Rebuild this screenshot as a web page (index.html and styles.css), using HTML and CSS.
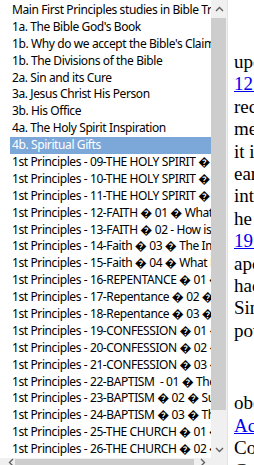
FILE: index.html
```html
<!DOCTYPE html>
<html lang="en">
  <head>
    <meta charset="UTF-8" />
    <title>First Principles</title>
    <link rel="stylesheet" href="styles.css">
  </head>
  <body>
    <div class="window">
      <!-- Lesson list -->
      <div class="listbox">
        <div class="list-main">
          <ul class="items">
            <li>Main First Principles studies in Bible Truths</li>
            <li>1a. The Bible God's Book</li>
            <li>1b. Why do we accept the Bible's Claims</li>
            <li>1b. The Divisions of the Bible</li>
            <li>2a. Sin and its Cure</li>
            <li>3a. Jesus Christ His Person</li>
            <li>3b. His Office</li>
            <li>4a. The Holy Spirit Inspiration</li>
            <li class="selected">4b. Spiritual Gifts</li>
            <li>1st Principles - 09-THE HOLY SPIRIT � 01 � The Spirit</li>
            <li>1st Principles - 10-THE HOLY SPIRIT � 02 � The Gifts</li>
            <li>1st Principles - 11-THE HOLY SPIRIT � 03 � Today</li>
            <li>1st Principles - 12-FAITH � 01 � What is Faith</li>
            <li>1st Principles - 13-FAITH � 02 - How is Faith gained</li>
            <li>1st Principles - 14-Faith � 03 � The Importance</li>
            <li>1st Principles - 15-Faith � 04 � What More</li>
            <li>1st Principles - 16-REPENTANCE � 01 � Meaning</li>
            <li>1st Principles - 17-Repentance � 02 � Necessity</li>
            <li>1st Principles - 18-Repentance � 03 � Fruits</li>
            <li>1st Principles - 19-CONFESSION � 01 � Meaning</li>
            <li>1st Principles - 20-CONFESSION � 02 � Examples</li>
            <li>1st Principles - 21-CONFESSION � 03 � Today</li>
            <li>1st Principles - 22-BAPTISM &nbsp;- 01 � The Meaning</li>
            <li>1st Principles - 23-BAPTISM � 02 � Subjects</li>
            <li>1st Principles - 24-BAPTISM � 03 � The Purpose</li>
            <li>1st Principles - 25-THE CHURCH � 01 � Its Name</li>
            <li>1st Principles - 26-THE CHURCH � 02 � Its Work</li>
          </ul>
          <div class="vscroll">
            <div class="arrow">
              <svg width="9" height="6" viewBox="0 0 9 6"><path d="M1 5 L4.5 1.5 L8 5" fill="none" stroke="#606060" stroke-width="1.4"/></svg>
            </div>
            <div class="track"><div class="thumb"></div></div>
            <div class="arrow">
              <svg width="9" height="6" viewBox="0 0 9 6"><path d="M1 1 L4.5 4.5 L8 1" fill="none" stroke="#606060" stroke-width="1.4"/></svg>
            </div>
          </div>
        </div>
        <div class="hscroll">
          <div class="arrow left">
            <svg width="6" height="9" viewBox="0 0 6 9"><path d="M5 1 L1.5 4.5 L5 8" fill="none" stroke="#606060" stroke-width="1.4"/></svg>
          </div>
          <div class="hthumb"></div>
          <div class="arrow">
            <svg width="6" height="9" viewBox="0 0 6 9"><path d="M1 1 L4.5 4.5 L1 8" fill="none" stroke="#606060" stroke-width="1.4"/></svg>
          </div>
          <div class="corner"></div>
        </div>
      </div>

      <!-- Lesson text -->
      <div class="doc">
        <p>
          upon them, as Jesus had said in John<br>
          <a href="#">12:32</a>. Then the apostles<br>
          received power from on high, and the<br>
          men were filled with the Spirit, so that<br>
          it is written that they spoke with tongues<br>
          earnestly, and were brought forth<br>
          into all the truth, as promised before<br>
          he left them, according to John<br>
          <a href="#">19:30</a>. These same<br>
          apostles went everywhere, and they<br>
          had miraculous gifts to confirm the word.<br>
          Since that time the gifts have ceased and<br>
          power is given through the word.
        </p>
        <p>
          obey the gospel today, as read in<br>
          <a href="#">Acts 2:38</a>, and keep the<br>
          Commandments of the Lord<br>
          God.
        </p>
      </div>
    </div>
  </body>
</html>
```

FILE: styles.css
```css
* {
  margin: 0;
  padding: 0;
  box-sizing: border-box;
}

html,
body {
  height: 100%;
  width: 100%;
  overflow: hidden;
  background-color: #ffffff;
}

.window {
  display: flex;
  height: 100%;
}

/* List box */
.listbox {
  width: 228px;
  flex-shrink: 0;
  border-right: 1px solid #e3e3e3;
  display: flex;
  flex-direction: column;
}

.list-main {
  display: flex;
  height: 460px;
}

.items {
  list-style: none;
  width: 211px;
  padding: 2px 0 0 10px;
  overflow: hidden;
  font-family: 'Noto Sans', sans-serif;
  font-size: 12px;
  letter-spacing: -0.4px;
  color: #000000;
}

.items li {
  height: 16.9px;
  line-height: 16.9px;
  padding-left: 2px;
  white-space: nowrap;
  overflow: hidden;
}

.items li.selected {
  background-color: #7ba7d9;
  color: #ffffff;
}

.vscroll {
  width: 16px;
  background-color: #f0f0f0;
  display: flex;
  flex-direction: column;
}

.vscroll .arrow {
  height: 17px;
  display: flex;
  align-items: center;
  justify-content: center;
}

.vscroll .track {
  flex: 1;
  padding-top: 1px;
}

.thumb {
  height: 392px;
  margin-right: 1px;
  background-color: #cdcdcd;
}

.hscroll {
  height: 17px;
  display: flex;
  background-color: #f0f0f0;
}

.hscroll .arrow {
  width: 17px;
  display: flex;
  align-items: center;
  justify-content: center;
}

.hscroll .arrow.left {
  width: 15px;
  justify-content: flex-end;
  padding-right: 1px;
}

.hthumb {
  flex: 1;
  margin: 1px 0 0 0;
  background-color: #cdcdcd;
}

.corner {
  width: 16px;
}

/* Document text */
.doc {
  flex: 1;
  overflow: hidden;
  padding: 51px 0 0 6px;
  font-family: 'Liberation Serif', serif;
  font-size: 19px;
  line-height: 22.4px;
  color: #000000;
  white-space: nowrap;
}

.doc p {
  margin-bottom: 50px;
}

.doc a {
  color: #0000ee;
}
```
